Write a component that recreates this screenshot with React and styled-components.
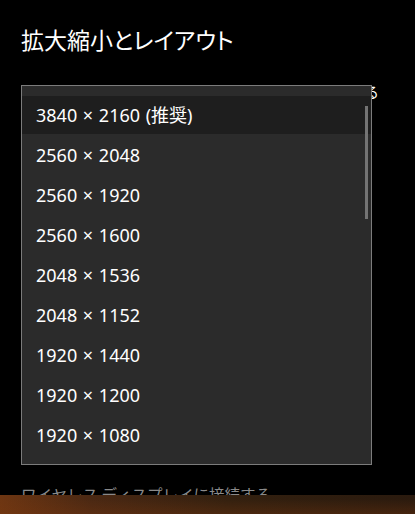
import styled, { createGlobalStyle } from "styled-components";

const GlobalStyle = createGlobalStyle`
  html, body {
    margin: 0;
    padding: 0;
    background: #000;
  }
  body {
    font-family: "Noto Sans", "Noto Sans CJK JP", sans-serif;
    color: #fff;
    overflow: hidden;
  }
`;

const Page = styled.div`
  position: relative;
  width: 415px;
  height: 514px;
  display: flex;
  flex-direction: column;
  background: #000;
  overflow: hidden;
`;

const Content = styled.div`
  flex: 1;
  display: flex;
  flex-direction: column;
  padding: 23px 21px 0;
`;

const Title = styled.h1`
  margin: 0;
  font-family: "Noto Sans CJK JP", sans-serif;
  font-weight: 400;
  font-size: 23px;
  line-height: 32px;
  font-feature-settings: "palt";
  color: #fff;
`;

const Description = styled.div`
  margin-top: 27px;
  font-family: "Noto Sans CJK JP", sans-serif;
  font-size: 15px;
  line-height: 20px;
  white-space: nowrap;
  color: #fff;
`;

const Spacer = styled.div`
  flex: 1;
`;

const FooterText = styled.div`
  height: 11px;
  overflow: hidden;
  font-family: "Noto Sans CJK JP", sans-serif;
  font-size: 15.5px;
  line-height: 20px;
  white-space: nowrap;
  color: #8a8a8a;
`;

const Strip = styled.div`
  height: 19px;
  background:
    linear-gradient(0deg, rgba(120, 55, 15, 0.35), rgba(0, 0, 0, 0) 80%),
    linear-gradient(90deg, #6e3612 0%, #4a2813 22%, #33200f 55%, #2a1a0e 100%);
`;

const Popup = styled.div`
  position: absolute;
  top: 85px;
  left: 21px;
  width: 351px;
  height: 380px;
  box-sizing: border-box;
  border: 1px solid #7c7c7c;
  background: #2b2b2b;
  padding: 9px 0;
`;

const List = styled.ul`
  list-style: none;
  margin: 0;
  padding: 0;
  display: flex;
  flex-direction: column;
`;

const Item = styled.li`
  height: 38px;
  margin: 1px 0;
  padding-left: 14px;
  font-family: "Noto Sans", "Noto Sans CJK JP", sans-serif;
  font-size: 18px;
  word-spacing: 1px;
  line-height: 38px;
  color: #fff;
  white-space: nowrap;
  background: ${(p) => (p.$selected ? "#1e1e1e" : "transparent")};
`;

const ScrollThumb = styled.div`
  position: absolute;
  top: 20px;
  right: 3px;
  width: 3px;
  height: 113px;
  background: #747474;
`;

const resolutions = [
  "3840 × 2160 (推奨)",
  "2560 × 2048",
  "2560 × 1920",
  "2560 × 1600",
  "2048 × 1536",
  "2048 × 1152",
  "1920 × 1440",
  "1920 × 1200",
  "1920 × 1080",
];

export default function App() {
  return (
    <>
      <GlobalStyle />
      <Page>
        <Content>
          <Title>拡大縮小とレイアウト</Title>
          <Description>テキスト、アプリ、その他の項目のサイズを変更する</Description>
          <Spacer />
          <FooterText>ワイヤレス ディスプレイに接続する</FooterText>
        </Content>
        <Strip />
        <Popup>
          <List>
            {resolutions.map((r, i) => (
              <Item key={r} $selected={i === 0}>
                {r}
              </Item>
            ))}
          </List>
          <ScrollThumb />
        </Popup>
      </Page>
    </>
  );
}
